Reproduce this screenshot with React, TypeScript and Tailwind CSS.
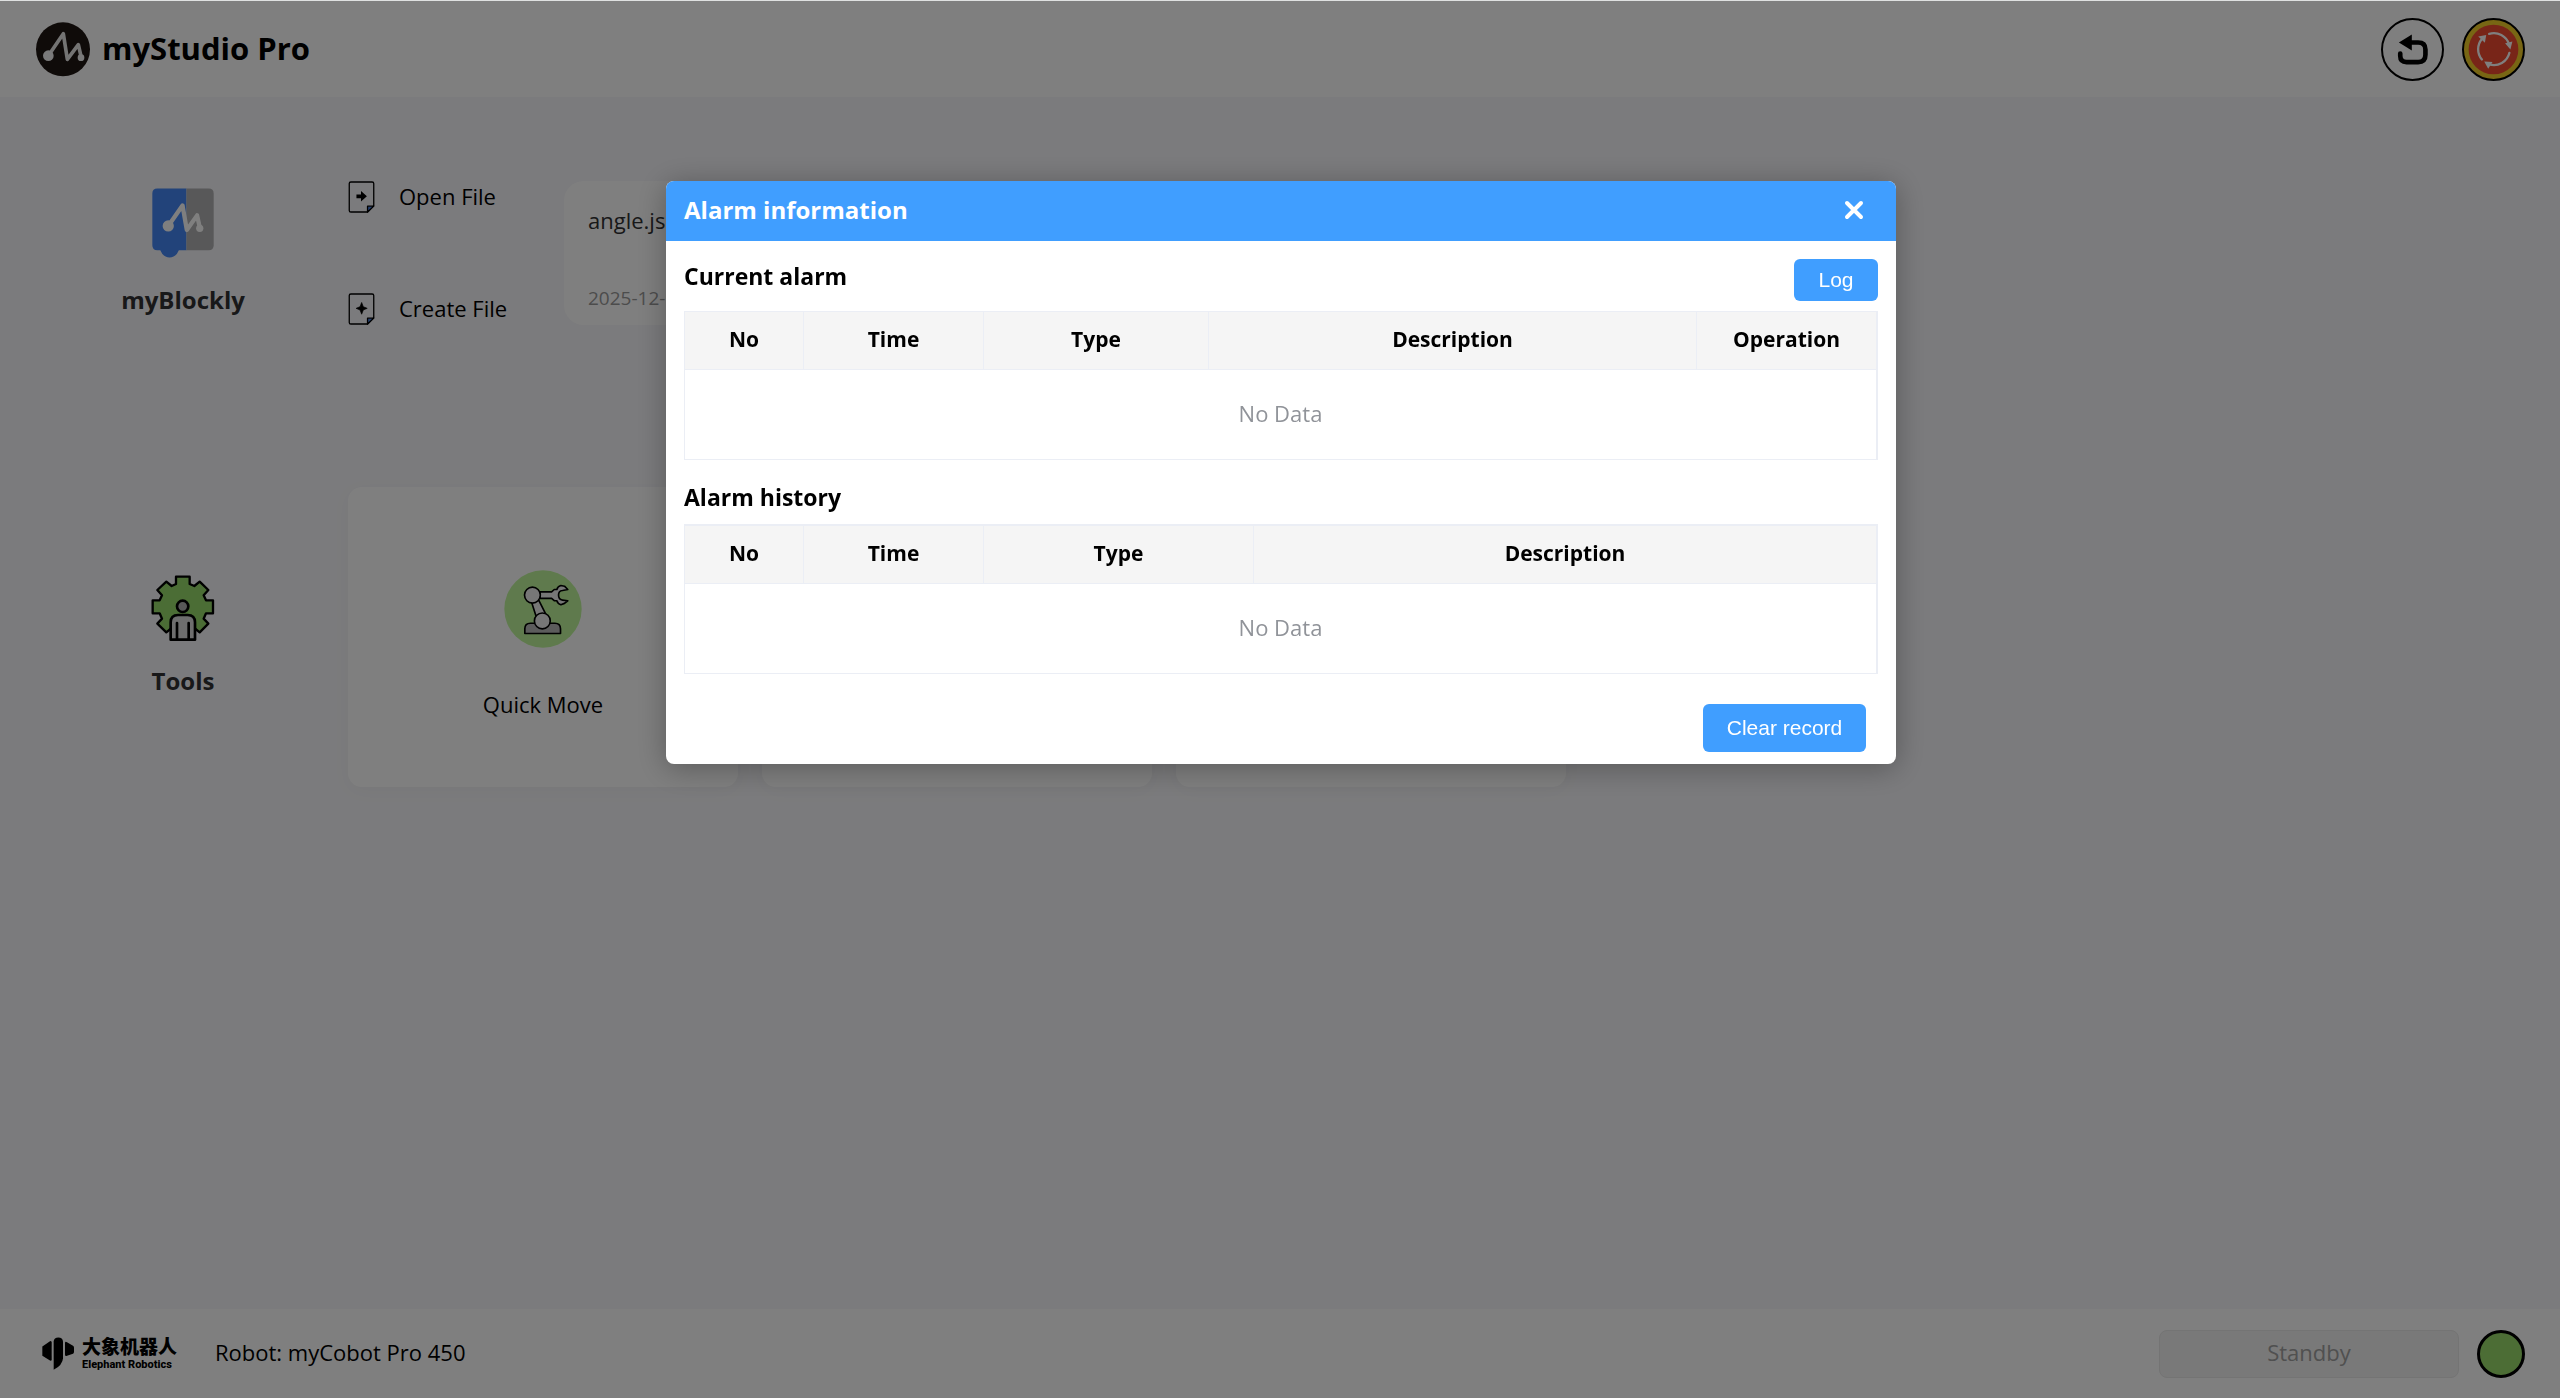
import type { ReactNode } from "react";
import { clsx } from "clsx";

const currentColumns = [
  { name: "No", width: "w-[119px]" },
  { name: "Time", width: "w-[180px]" },
  { name: "Type", width: "w-[225px]" },
  { name: "Description", width: "" },
  { name: "Operation", width: "w-[179px]" },
];

const historyColumns = [
  { name: "No", width: "w-[119px]" },
  { name: "Time", width: "w-[180px]" },
  { name: "Type", width: "w-[270px]" },
  { name: "Description", width: "" },
];

const LogoIcon = () => (
  <svg viewBox="108 65 162 165" className="h-[55px] w-[54px]">
    <circle cx="189" cy="147" r="81" fill="#1f1613" />
    <path
      d="M145 166 L190 100 L202 177 L235 133 L244 172"
      fill="none"
      stroke="#fff"
      strokeOpacity="0.9"
      strokeWidth="11"
      strokeLinecap="round"
      strokeLinejoin="round"
    />
    <circle cx="145" cy="166" r="16" fill="#f4f4f4" />
    <circle cx="243" cy="172" r="10" fill="#f4f4f4" />
  </svg>
);

const UndoIcon = () => (
  <svg viewBox="122 53 190 190" className="size-[63px]">
    <circle cx="217" cy="148" r="92" fill="none" stroke="#000" strokeWidth="6" />
    <path
      d="M210 127 H234 Q256 127 256 148 V164 Q256 186 234 186 H199 Q180 186 180 167 V160"
      fill="none"
      stroke="#000"
      strokeWidth="14"
      strokeLinecap="round"
    />
    <path d="M176 127 L215 103 V151 Z" fill="#000" />
  </svg>
);

const StopIcon = () => (
  <svg viewBox="365 53 190 190" className="size-[63px]">
    <circle cx="460" cy="148" r="92" fill="#f0cc28" stroke="#000" strokeWidth="6" />
    <circle cx="460" cy="148" r="75" fill="#f04a30" />
    <g fill="none" stroke="#fff" strokeWidth="7" strokeLinecap="round">
      <path d="M447 101 A48 48 0 0 1 507 133" />
      <path d="M508 158 A48 48 0 0 1 447 193" />
      <path d="M425 178 A48 48 0 0 1 425 116" />
    </g>
    <g fill="#fff">
      <path d="M495 129 L517 124 L511 148 Z" />
      <path d="M432 184 L457 186 L444 206 Z" />
      <path d="M414 109 L438 104 L434 128 Z" />
    </g>
  </svg>
);

const BlocklyIcon = () => (
  <svg viewBox="36 54 187 210" className="h-[70px] w-[62px]">
    <path
      d="M52 55 H140 V241 H117 Q108 263 89 263 Q70 263 61 241 H52 Q37 241 37 226 V70 Q37 55 52 55 Z"
      fill="#4486f4"
    />
    <path d="M140 55 H207 Q222 55 222 70 V226 Q222 241 207 241 H140 Z" fill="#b0b0b2" />
    <path
      d="M85 168 L128 106 L141 180 L172 136 L180 172"
      fill="none"
      stroke="#fff"
      strokeWidth="13"
      strokeLinecap="round"
      strokeLinejoin="round"
    />
    <circle cx="85" cy="168" r="17" fill="#fff" />
    <circle cx="180" cy="175" r="11" fill="#fff" />
  </svg>
);

const FileIcon = ({ children }: { children: ReactNode }) => (
  <svg viewBox="624 32 81 98" className="h-8 w-[27px]">
    <path
      d="M632 35 H697 Q702 35 702 40 V108 L683 127 H632 Q627 127 627 122 V40 Q627 35 632 35 Z"
      fill="none"
      stroke="#000"
      strokeWidth="4"
    />
    <path d="M683 127 V109 H702 Z" fill="#4a7fe0" stroke="#000" strokeWidth="4" strokeLinejoin="round" />
    {children}
  </svg>
);

const gearPath =
  "M111 47 H152 V69 L166 75 L182 62 L208 87 L194 103 L201 118 H222 V157 H201 L194 173 L208 188 L182 214 L166 201 H98 L82 214 L55 188 L69 173 L62 157 H41 V118 H62 L69 103 L55 87 L82 62 L98 75 L111 69 Z";

const ToolsIcon = () => (
  <svg viewBox="36 42 192 198" className="h-[66px] w-16">
    <path d={gearPath} fill="#97da6b" stroke="#000" strokeWidth="7" strokeLinejoin="round" />
    <circle cx="131" cy="136" r="17" fill="#b0b0b0" stroke="#000" strokeWidth="8" />
    <path
      d="M95 236 V184 Q95 162 117 162 H146 Q168 162 168 184 V236 Z"
      fill="#dcdcdc"
      stroke="#000"
      strokeWidth="8"
      strokeLinejoin="round"
    />
    <path d="M114 186 V234 M149 186 V234" stroke="#000" strokeWidth="8" strokeLinecap="round" />
  </svg>
);

const QuickMoveIcon = () => (
  <svg viewBox="1091 29 236 236" className="size-[78px]">
    <circle cx="1209" cy="147" r="117" fill="#bff59b" />
    <g stroke="#000" strokeWidth="5" strokeLinejoin="round">
      <path d="M1154 221 V207 Q1154 190 1171 190 H1245 Q1262 190 1262 207 V221 Z" fill="#b8b8b8" />
      <path d="M1174 125 L1188 169 L1217 162 L1196 120 Z" fill="#eee" />
      <path
        d="M1200 95 H1235 L1243 88 H1251 Q1253 79 1263 76 L1274 78 L1284 88 L1268 91 Q1256 92 1256 105 Q1256 119 1268 120 L1284 122 L1274 130 L1263 134 Q1253 131 1251 122 H1243 L1235 115 H1200 Z"
        fill="#eee"
      />
      <circle cx="1177" cy="105" r="24" fill="#eee" />
      <circle cx="1207" cy="183" r="24" fill="#eee" />
    </g>
  </svg>
);

const ElephantIcon = () => (
  <svg viewBox="126 145 96 98" className="h-[33px] w-8">
    <path d="M127 173 L150 157 Q155 155 155 161 V211 Q155 217 150 215 L127 201 Z" />
    <path d="M161 243 V158 Q162 146 175 146 Q188 146 189 158 V208 Q188 228 161 243 Z" />
    <path d="M195 163 Q195 156 201 160 L219 171 Q222 173 222 177 V189 Q222 193 219 195 L201 201 Q195 203 195 197 Z" />
  </svg>
);

type Column = { name: string; width: string };

const AlarmTable = ({ columns, label, className }: { columns: Column[]; label: string; className?: string }) => (
  <table
    aria-label={label}
    className={clsx(
      "w-full table-fixed border-separate border-spacing-0 border border-r-2 border-[#ebeef5] leading-[30px]",
      className
    )}
  >
    <thead>
      <tr className="h-[58px] bg-[#f5f5f5]">
        {columns.map((column) => (
          <th
            key={column.name}
            className={clsx(
              "border-r border-b border-[#ebeef5] p-0 pb-[3px] text-[21px] font-bold text-black last:border-r-0",
              column.width
            )}
          >
            {column.name}
          </th>
        ))}
      </tr>
    </thead>
    <tbody>
      <tr className="h-[89px]">
        <td colSpan={columns.length} className="p-0 pb-[3px] text-center text-[22px] text-[#909399]">
          No Data
        </td>
      </tr>
    </tbody>
  </table>
);

const AlarmDialog = () => (
  <div className="fixed inset-x-0 top-px bottom-0 flex items-start justify-center bg-black/50 pt-[180px] pl-0.5">
    <div
      role="dialog"
      aria-label="Alarm information"
      className="w-[1230px] max-w-full overflow-hidden rounded-lg bg-white shadow-[0_4px_30px_rgba(0,0,0,0.3)]"
    >
      <div className="flex h-[60px] items-center justify-between bg-[#409eff] pr-8 pb-0.5 pl-[18px] text-white">
        <h2 className="text-2xl leading-9 font-bold">Alarm information</h2>
        <button aria-label="Close">
          <svg viewBox="0 0 20 20" className="size-5">
            <path d="M3 3 L17 17 M17 3 L3 17" stroke="currentColor" strokeWidth="4" strokeLinecap="round" />
          </svg>
        </button>
      </div>

      <div className="px-[18px] pt-[18px] pb-3">
        <div className="mb-2.5 flex items-start justify-between">
          <h3 className="text-[23px] leading-[34px] font-bold">Current alarm</h3>
          <button className="h-[42px] w-[84px] rounded-md bg-[#409eff] font-['Liberation_Sans',sans-serif] text-[21px] text-white">
            Log
          </button>
        </div>
        <AlarmTable columns={currentColumns} label="Current alarm" />

        <h3 className="mt-5 mb-2.5 text-[23px] leading-[34px] font-bold">Alarm history</h3>
        <AlarmTable columns={historyColumns} label="Alarm history" className="border-t-2" />

        <div className="mt-[30px] flex justify-end pr-3">
          <button className="h-12 w-[163px] rounded-md bg-[#409eff] font-['Liberation_Sans',sans-serif] text-[21px] text-white">
            Clear record
          </button>
        </div>
      </div>
    </div>
  </div>
);

const App = () => {
  return (
    <div className="flex min-h-screen flex-col border-t border-[#dfe1e1] bg-[#f7f7fa] font-['Open_Sans','Noto_Sans_CJK_SC',sans-serif] text-[22px] leading-9 text-black">
      <header className="flex h-24 items-center justify-between bg-white pr-[35px] pl-9">
        <div className="flex items-center gap-3">
          <LogoIcon />
          <h1 className="pb-0.5 text-[31px] leading-10 font-bold">myStudio Pro</h1>
        </div>
        <div className="flex items-center gap-[18px]">
          <button aria-label="Back">
            <UndoIcon />
          </button>
          <button aria-label="Emergency stop">
            <StopIcon />
          </button>
        </div>
      </header>

      <main className="flex-1 pt-[84px] pl-[18px]">
        <section className="flex">
          <div className="flex w-[330px] flex-col items-center justify-center gap-6">
            <BlocklyIcon />
            <h2 className="text-2xl leading-9 font-bold text-[#303133]">myBlockly</h2>
          </div>
          <div className="flex h-36 w-[216px] flex-col items-start justify-between">
            <button className="flex h-8 items-center gap-6">
              <FileIcon>
                <path d="M649 73 H663 V63 L681 79 L663 95 V85 H649 Z" />
              </FileIcon>
              <span className="pb-[3px]">Open File</span>
            </button>
            <button className="flex h-8 items-center gap-6">
              <FileIcon>
                <path d="M665 61 L670 74 L682 79 L670 84 L665 97 L660 84 L648 79 L660 74 Z" stroke="#000" strokeWidth="2" />
              </FileIcon>
              <span className="pb-[3px]">Create File</span>
            </button>
          </div>
          <button className="flex w-[390px] flex-col items-start justify-between rounded-[20px] bg-white px-6 pt-[21px] pb-3">
            <span className="text-[#303133]">angle.json</span>
            <span className="text-[19px] leading-[30px] text-[#999]">2025-12-05</span>
          </button>
        </section>

        <section className="mt-[162px] flex">
          <div className="flex w-[330px] flex-col items-center justify-center gap-[22px]">
            <ToolsIcon />
            <h2 className="text-2xl leading-9 font-bold text-[#303133]">Tools</h2>
          </div>
          <div className="flex gap-6">
            <button className="flex h-[300px] w-[390px] flex-col items-center justify-center gap-[38px] rounded-[14px] bg-white pt-[18px] shadow-[0_4px_20px_rgba(0,0,0,0.03)]">
              <QuickMoveIcon />
              Quick Move
            </button>
            <div className="h-[300px] w-[390px] rounded-[14px] bg-white shadow-[0_4px_20px_rgba(0,0,0,0.03)]" />
            <div className="h-[300px] w-[390px] rounded-[14px] bg-white shadow-[0_4px_20px_rgba(0,0,0,0.03)]" />
          </div>
        </section>
      </main>

      <footer className="flex h-[89px] items-center justify-between bg-white pr-[35px] pl-[42px]">
        <div className="flex items-center">
          <ElephantIcon />
          <div className="ml-2 w-[95px]">
            <p className="text-[19px] leading-[22px] font-black">大象机器人</p>
            <p className="font-['Roboto',sans-serif] text-[11px] leading-[14px] font-extrabold whitespace-nowrap">
              Elephant Robotics
            </p>
          </div>
          <p className="ml-[38px] pb-[3px]">Robot: myCobot Pro 450</p>
        </div>
        <div className="flex items-center gap-[18px]">
          <button disabled className="h-12 w-[300px] rounded-lg border border-[#e8e8e8] bg-[#f3f3f3] pb-[3px] text-[#a0a0a0]">
            Standby
          </button>
          <span className="size-12 rounded-full border-[3px] border-black bg-[#98da6a]" />
        </div>
      </footer>

      <AlarmDialog />
    </div>
  );
};

export default App;
